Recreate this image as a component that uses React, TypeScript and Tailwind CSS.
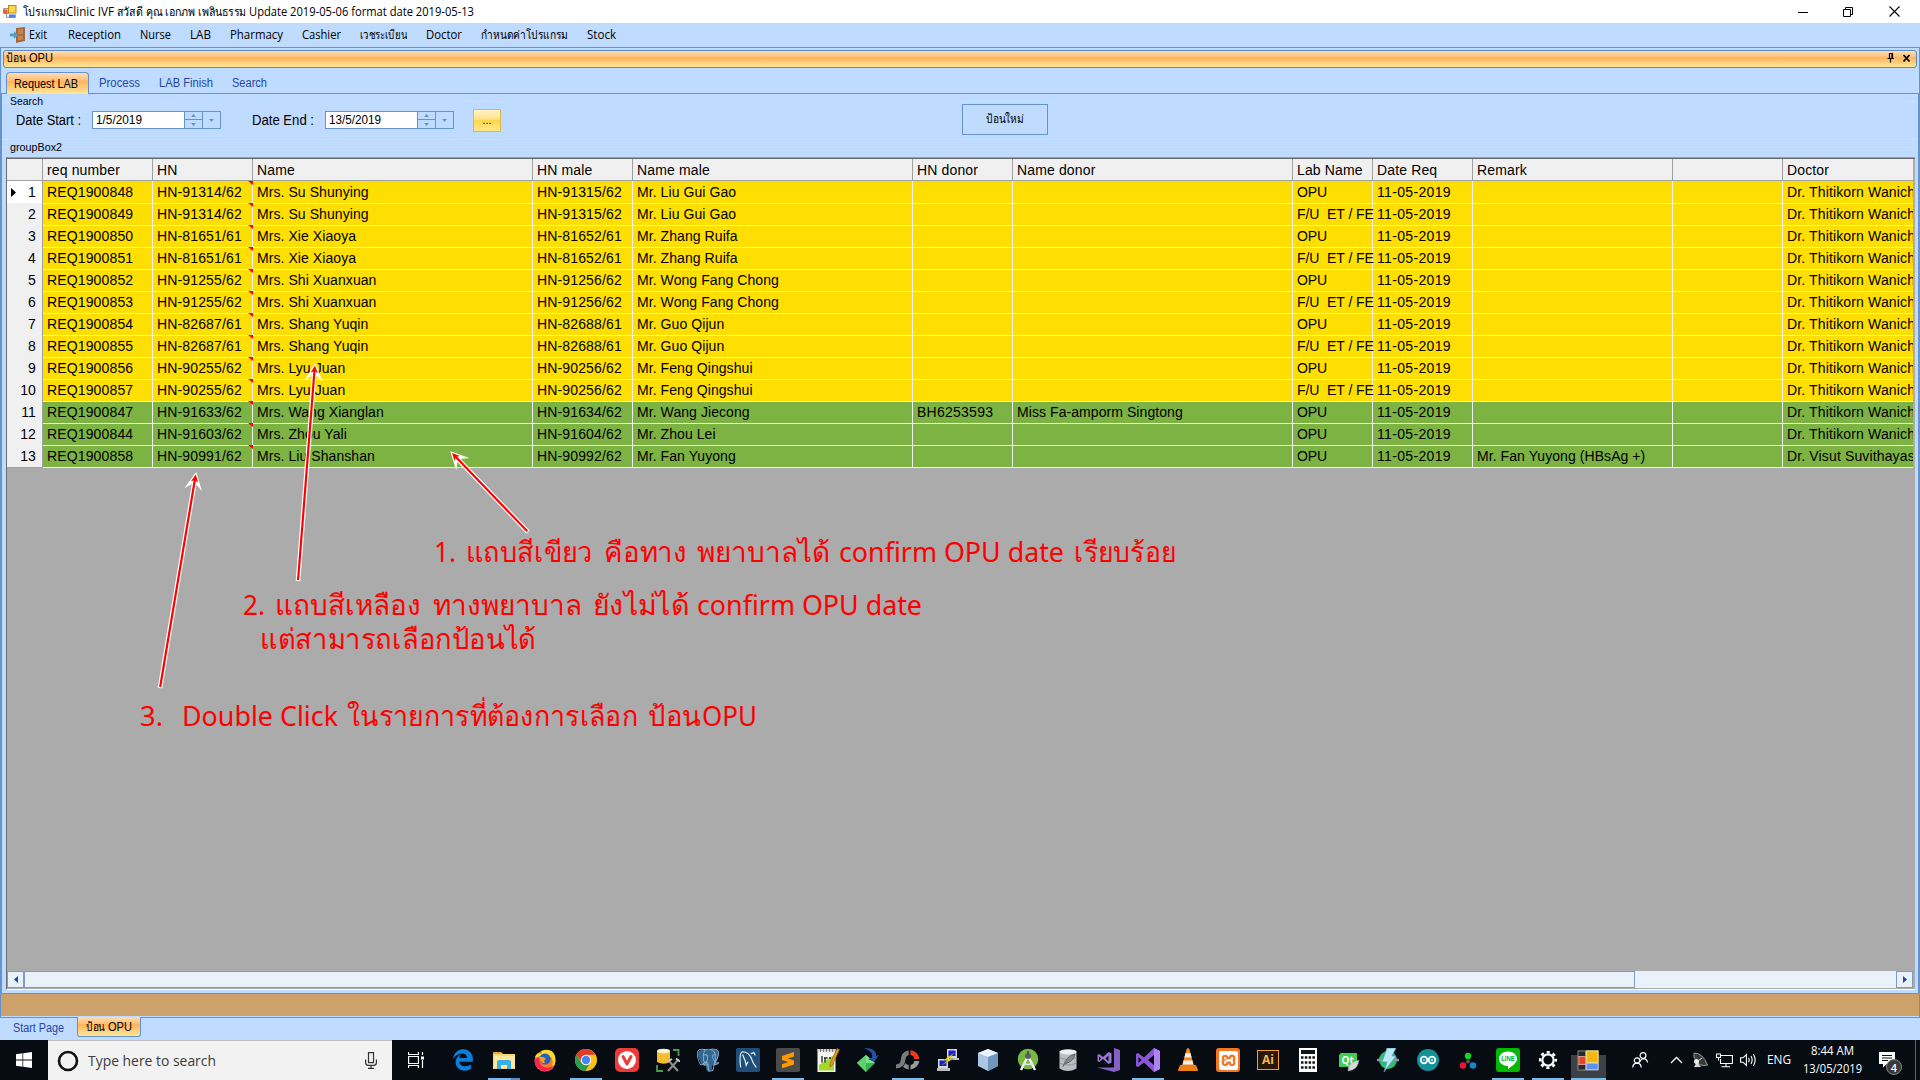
import { useLayoutEffect, useRef, useState, type ReactNode } from "react";
import { FaEdgeLegacy } from "react-icons/fa";
import { SiPostgresql, SiXampp } from "react-icons/si";

/* Text squeezed or stretched to an exact advance width. */
function Fit({ w, children, className = "" }: { w: number; children: ReactNode; className?: string }) {
  const ref = useRef<HTMLSpanElement>(null);
  const [s, setS] = useState(1);
  useLayoutEffect(() => {
    const n = ref.current;
    if (n && n.offsetWidth) setS(w / n.getBoundingClientRect().width);
  }, []);
  return (
    <span className={"inline-block whitespace-pre " + className} style={{ width: w }}>
      <span ref={ref} className="inline-block origin-left whitespace-pre" style={{ transform: `scaleX(${s})` }}>
        {children}
      </span>
    </span>
  );
}

const Svg = ({ children, s = 24, className = "" }: { children: ReactNode; s?: number; className?: string }) => (
  <svg width={s} height={s} viewBox="0 0 24 24" fill="none" className={"shrink-0 " + className}>
    {children}
  </svg>
);

const FormsIcon = ({ s }: { s: number }) => (
  <Svg s={s}>
    <rect x="1" y="2" width="21" height="20" fill="#2a2a2a" stroke="#8c8c8c" />
    <path d="M9 2v20M1 8h8M1 16h21" stroke="#a9a9a9" />
    <rect x="10" y="2" width="12" height="12" fill="#f3b713" stroke="#ffe27a" />
    <rect x="2" y="8" width="7" height="8" fill="#e0442f" stroke="#f79a8a" />
    <rect x="10" y="15" width="12" height="6.5" fill="#5b8ff0" stroke="#a9c6ff" />
  </Svg>
);

const TitleIcon = () => (
  <svg width="14" height="14" viewBox="0 0 14 14" fill="none">
    <path d="M.5 3.500h5v5h-5zM3.500 8.500v4h9v-3" fill="#eef2f8" stroke="#9a9a9a" />
    <rect x="5.500" y=".5" width="7.500" height="7.500" fill="#ffd54a" stroke="#b98a12" />
    <rect x=".5" y="4.500" width="4" height="4" fill="#e2573f" />
    <rect x="6" y="9.500" width="6" height="3" fill="#4d7fe0" />
  </svg>
);

const menu: [string, number][] = [
  ["Reception", 53], ["Nurse", 31], ["LAB", 21], ["Pharmacy", 53], ["Cashier", 39],
  ["เวชระเบียน", 47], ["Doctor", 36], ["กำหนดค่าโปรแกรม", 87], ["Stock", 29],
];

const GRID = "grid grid-cols-[36px_110px_100px_280px_100px_280px_100px_280px_80px_100px_200px_110px_130px]";
const heads = ["req number", "HN", "Name", "HN male", "Name male", "HN donor", "Name donor", "Lab Name", "Date Req", "Remark", "", "Doctor"];
const T = "Dr. Thitikorn Wanich";
const F = "F/U  ET / FE";
const rows: string[][] = [
  ["REQ1900848", "HN-91314/62", "Mrs. Su Shunying", "HN-91315/62", "Mr. Liu Gui Gao", "", "", "OPU"],
  ["REQ1900849", "HN-91314/62", "Mrs. Su Shunying", "HN-91315/62", "Mr. Liu Gui Gao", "", "", F],
  ["REQ1900850", "HN-81651/61", "Mrs. Xie Xiaoya", "HN-81652/61", "Mr. Zhang Ruifa", "", "", "OPU"],
  ["REQ1900851", "HN-81651/61", "Mrs. Xie Xiaoya", "HN-81652/61", "Mr. Zhang Ruifa", "", "", F],
  ["REQ1900852", "HN-91255/62", "Mrs. Shi Xuanxuan", "HN-91256/62", "Mr. Wong Fang Chong", "", "", "OPU"],
  ["REQ1900853", "HN-91255/62", "Mrs. Shi Xuanxuan", "HN-91256/62", "Mr. Wong Fang Chong", "", "", F],
  ["REQ1900854", "HN-82687/61", "Mrs. Shang Yuqin", "HN-82688/61", "Mr. Guo Qijun", "", "", "OPU"],
  ["REQ1900855", "HN-82687/61", "Mrs. Shang Yuqin", "HN-82688/61", "Mr. Guo Qijun", "", "", F],
  ["REQ1900856", "HN-90255/62", "Mrs. Lyu Juan", "HN-90256/62", "Mr. Feng Qingshui", "", "", "OPU"],
  ["REQ1900857", "HN-90255/62", "Mrs. Lyu Juan", "HN-90256/62", "Mr. Feng Qingshui", "", "", F],
  ["REQ1900847", "HN-91633/62", "Mrs. Wang Xianglan", "HN-91634/62", "Mr. Wang Jiecong", "BH6253593", "Miss Fa-amporm Singtong", "OPU"],
  ["REQ1900844", "HN-91603/62", "Mrs. Zhou Yali", "HN-91604/62", "Mr. Zhou Lei", "", "", "OPU"],
  ["REQ1900858", "HN-90991/62", "Mrs. Liu Shanshan", "HN-90992/62", "Mr. Fan Yuyong", "", "", "OPU"],
];

/* Names run tighter than codes; dates run wider. */
const spacing = (j: number) =>
  j === 7 ? "tracking-[-0.06px]" : j === 8 ? "tracking-[0.33px]" : j === 5 ? "tracking-[0.25px]" : j === 2 || j === 4 || j === 6 || j === 9 ? "tracking-[0.07px]" : "";

function DateBox({ value, w }: { value: string; w: number }) {
  return (
    <div className="flex h-[18px] w-[129px] border border-[#6593cf] bg-[#bfdbff]">
      <div className="flex w-[91px] items-center bg-white pl-[3px] text-[12px]"><Fit w={w}>{value}</Fit></div>
      <div className="flex w-[18px] flex-col border-l border-[#6593cf]">
        <div className="flex h-2 items-center justify-center border-b border-[#6593cf]"><svg width="5" height="3"><path d="M0 3L2.5 0L5 3z" fill="#6593cf" /></svg></div>
        <div className="flex h-2 items-center justify-center"><svg width="5" height="3"><path d="M0 0L2.5 3L5 0z" fill="#6593cf" /></svg></div>
      </div>
      <div className="flex flex-1 items-center justify-center border-l border-[#6593cf]"><svg width="5" height="3"><path d="M0 0L2.5 3L5 0z" fill="#6593cf" /></svg></div>
    </div>
  );
}

function GroupLine({ label, w }: { label: string; w: number }) {
  return (
    <div className="flex h-[14px] items-center text-[11px]">
      <div className="h-px w-[5px] bg-[#d5dfe8]" />
      <div className="px-[3px] leading-none"><Fit w={w}>{label}</Fit></div>
      <div className="h-px flex-1 bg-[#d5dfe8]" />
    </div>
  );
}

function Arrow({ x1, y1, x2, y2 }: { x1: number; y1: number; x2: number; y2: number }) {
  const a = (Math.atan2(y2 - y1, x2 - x1) * 180) / Math.PI;
  const l = Math.hypot(x2 - x1, y2 - y1);
  return (
    <g transform={`translate(${x2} ${y2}) rotate(${a})`}>
      <path d={`M${-l} 0H-3`} stroke="#fff" strokeWidth="4.6" />
      <path d="M1 0L-17 -9L-11 -1.5V1.5L-17 9Z" fill="#fff" />
      <path d={`M${-l + 1} 0H-5`} stroke="#f00" strokeWidth="2.2" />
      <path d="M-1.5 0L-9 -3.6L-7 0L-9 3.6Z" fill="#f00" />
    </g>
  );
}

const seg = (t: string, w: number, ml = 0): [string, number, number] => [t, w, ml];
const notes: { pos: string; parts: [string, number, number][] }[] = [
  { pos: "left-[434px] top-[531px]", parts: [seg("1.", 22), seg("แถบสีเขียว", 127, 10), seg("คือทาง", 83, 11), seg("พยาบาลได้", 133, 10), seg("confirm OPU date", 225, 9), seg("เรียบร้อย", 102, 10)] },
  { pos: "left-[243px] top-[584px]", parts: [seg("2.", 22), seg("แถบสีเหลือง", 146, 10), seg("ทางพยาบาล", 149, 12), seg("ยังไม่ได้", 96, 11), seg("confirm OPU date", 225, 8)] },
  { pos: "left-[260px] top-[618px]", parts: [seg("แต่สามารถเลือกป้อนได้", 276)] },
  { pos: "left-[140px] top-[695px]", parts: [seg("3.", 23), seg("Double Click", 156, 19), seg("ในรายการที่ต้องการเลือก", 291, 9), seg("ป้อน", 53, 10), seg("OPU", 55, 1)] },
];

const icons: { el: ReactNode; on?: boolean }[] = [
  { el: <FaEdgeLegacy size={22} color="#0a7fdc" /> },
  { on: true, el: <Svg><path d="M1 4h8l2 2h12v15H1z" fill="#f7d774" /><path d="M1 4h8l1 2H1z" fill="#e2a92b" /><path d="M2 8h21v12H2z" fill="#ffe79b" /><path d="M5 21v-7q0-2 2-2h10q2 0 2 2v7h-4v-4H9v4z" fill="#38b0e8" /></Svg> },
  { el: <Svg><circle cx="12" cy="13" r="10.5" fill="#ff7a1a" /><path d="M2 9C4 3 9 6 9 6L8 3Q19-1 22 8Q24 17 17 22Q22 14 18 9Z" fill="#ffd92e" /><path d="M1.5 12Q2 21 11 23.4Q18 23 21 17Q15 22 9 18Q5 14 7 8Z" fill="#f5225b" /><circle cx="12" cy="11" r="5.6" fill="#1b63c6" /><path d="M6 9Q11 8 13 11Q10 12 12 15Q7 16 6 9z" fill="#ff9c21" /></Svg> },
  { on: true, el: <Svg><circle cx="12" cy="12" r="11" fill="#fbc116" /><path d="M2.4 6.6A11 11 0 0 0 11.5 23L16 15L7 14.5Z" fill="#2a9c4a" /><path d="M2.4 6.6L8 15L12 7L21.6 6.6Q17 1 12 1Q6 1 2.4 6.6z" fill="#e23b2e" /><circle cx="12" cy="12" r="5.2" fill="#fff" /><circle cx="12" cy="12" r="4.2" fill="#4285f4" /></Svg> },
  { el: <Svg><rect width="24" height="24" rx="5" fill="#ef3939" /><circle cx="12" cy="12" r="9" fill="#fff" /><path d="M8 8.5L12 16L16 8.5" stroke="#ef3939" strokeWidth="3" strokeLinecap="round" strokeLinejoin="round" /></Svg> },
  { el: <Svg><path d="M1 3v11q6.500 3.500 13 0V3z" fill="#f4bc2e" /><ellipse cx="7.500" cy="3" rx="6.500" ry="2.300" fill="#fff3cf" /><path d="M17 2h5.500v6M1 17v6h6" stroke="#4d9a4d" strokeWidth="1.800" /><path d="M12 12l10 11M22 12L12 23" stroke="#8f8f8f" strokeWidth="2" /><path d="M11 14l5-3M20 10.500l4 3" stroke="#ccc" strokeWidth="2" /></Svg> },
  { el: <Svg><path d="M3 3Q7 0 12 2Q18-1 22 3Q24 9 19.500 15L22 16Q19 18.500 16 17.500Q16.500 24 13 24Q9.500 23 10 17Q6 19 4 13Q0 5 3 3z" fill="#336791" /><g transform="translate(.5 .5) scale(.96)"><SiPostgresql size={24} color="#9fc0dc" /></g></Svg> },
  { el: <div className="flex size-6 items-center justify-center rounded-[2px] bg-[#1f4f79]"><Svg s={22}><path d="M4 20Q2 4 6 3Q13 3 16 11Q17 15 21 20M6 6l3 7 1 5 2-4M15 5l4-1M18 3l2 4" stroke="#e7f1f9" strokeWidth="1.3" /></Svg></div> },
  { on: true, el: <Svg><rect width="24" height="24" rx="2" fill="#4b4b4b" /><path d="M6 8L18 4v4.5L12 10.6L18 12.5v4L6 20.3v-4L12.3 14L6 12z" fill="#ff9800" /></Svg> },
  { el: <Svg><path d="M1.500 1h18v23h-18z" fill="#f4f4ee" /><path d="M3 17L18 7v15.500H3z" fill="#a6d82b" /><path d="M1.500 1h18v2.500h-18z" fill="#cfcfcf" /><path d="M4.500 1v3M7.500 1v3M10.500 1v3M13.500 1v3M16.500 1v3" stroke="#666" strokeWidth=".8" /><path d="M6 8v6.500M9 10v4.500M8 10h3.500M13 10h2" stroke="#222" strokeWidth="1.300" /><path d="M14 16L21 .5l2.500 1L16.500 17 14 19z" fill="#e79a2a" stroke="#8a4b12" strokeWidth=".6" /></Svg> },
  { el: <Svg><path d="M10 7l9 8-9 9-9-9z" fill="#35b44a" /><path d="M10 7l9 8H1z" fill="#7fe08a" /><path d="M10 7v17L1 15z" fill="#5fd070" /><path d="M8 0Q21 0 20 8l3-1-5 7-6-3 4-1Q18 4 8 0z" fill="#2450a5" /></Svg> },
  { on: true, el: <Svg><path d="M14.5 2.2A9.5 9.5 0 0 1 23.3 11H18.2A4.5 4.5 0 0 0 14.5 7z" fill="#f03a1c" /><path d="M23.3 13A9.5 9.5 0 0 1 14.5 21.4V17A4.5 4.5 0 0 0 18.2 13z" fill="#9a9a9a" /><path d="M12.7 2.2V7Q9.600 8 9.300 12Q8.500 20 0 20.500V16.500Q4.700 16 4.700 12Q5 4 12.700 2.200z" fill="#7b7b7b" /><path d="M9.5 15Q10.5 17 12.700 17V21.400Q9 21 7 19z" fill="#8b8b8b" /></Svg> },
  { el: <Svg><rect x="11" y="1" width="10" height="9" fill="#d8d8d8" /><rect x="12.5" y="2.5" width="7" height="5.5" fill="#1320d8" /><path d="M10 10h13v2H10z" fill="#bcbcbc" /><rect x="2" y="11" width="10" height="9" fill="#d8d8d8" /><rect x="3.5" y="12.5" width="7" height="5.5" fill="#1320d8" /><path d="M1 20h13v3H1z" fill="#bcbcbc" /><path d="M18 5L8 12h4l-6 5 11-6h-4z" fill="#ffe81a" stroke="#7a6a00" strokeWidth=".5" /></Svg> },
  { el: <Svg><path d="M12 1l10 4v13l-10 5-10-5V5z" fill="#a9c6e3" /><path d="M12 1l10 4-10 4L2 5z" fill="#e8f3fc" /><path d="M12 9l10-4v13l-10 5z" fill="#6f97bd" /></Svg> },
  { el: <Svg><circle cx="12" cy="11" r="10.3" fill="#78b843" /><path d="M12 8L5 22M12 8l7 14" stroke="#f2f2f2" strokeWidth="2.4" /><circle cx="12" cy="8" r="3" fill="#5f5f5f" /><path d="M7 15q5 3 10 0" stroke="#e5e5e5" strokeWidth="1.6" /><path d="M12 3v4" stroke="#555" strokeWidth="2" /></Svg> },
  { el: <Svg><path d="M3.5 3.5v17q8.500 5 17 0v-17z" fill="#b9bec4" /><ellipse cx="12" cy="3.800" rx="8.500" ry="2.600" fill="#eceff2" /><path d="M3.500 9.500q8.500 4 17 0M3.500 15q8.500 4 17 0" stroke="#8d9399" /><path d="M7 19Q10 8 19 6Q18 13 9 16" fill="#858b91" stroke="#4d5257" strokeWidth=".8" /></Svg> },
  { el: <Svg><path d="M18 0l6 2v20l-6 2-17-4.500 17 0z" fill="#8661c5" /><path d="M1.500 7l1.500-1 4 3 5.500-5 3 1.200v9.600l-3 1.200-5.500-5-4 3-1.500-1zM12.500 7.500L9.500 10.500l3 3zM3 8.500v4l2-2z" fill="#9a77d3" fillRule="evenodd" /></Svg> },
  { on: true, el: <Svg><path d="M18 0l6 3v18l-6 3L8 14.500 2 19l-2-1V6l2-1 6 4.500zM18 7l-6 5 6 5zM2.500 9v6l3-3z" fill="#8a56d6" fillRule="evenodd" /><path d="M18 0l6 3v18l-6 3z" fill="#b083f0" /></Svg> },
  { el: <Svg><path d="M12 0q1 0 1.500 1.500L18 18H6L10.500 1.500Q11 0 12 0z" fill="#f28c1b" /><path d="M9.600 5h4.800l1.200 4.500H8.400zM7.600 12.500h8.800l1 4H6.600z" fill="#eee" /><path d="M4 17h16l2 5q0 1-1 1H3q-1 0-1-1z" fill="#ef7f12" /></Svg> },
  { el: <div className="flex size-6 items-center justify-center rounded-[3px] bg-[#f37623]"><SiXampp size={19} color="#fff" /></div> },
  { el: <div className="flex h-[20px] w-[22px] items-center justify-center border border-[#f0a02a] bg-[#2a1705] font-['Open_Sans'] text-[12px] leading-none font-bold text-[#f4b45a]">Ai</div> },
  { el: <Svg><rect x="3" width="18" height="24" fill="#fff" /><rect x="5" y="2" width="14" height="4" fill="#10141b" /><path d="M5 9.500h14M5 14.500h14M5 19.500h14" stroke="#10141b" strokeWidth="2.600" strokeDasharray="2.500 1.300" /></Svg> },
  { el: <Svg><path d="M5 5h16v14H3V7z" fill="#41cd52" /><text x="5.500" y="15.500" fontSize="10" fontWeight="700" fill="#fff" fontFamily="Open Sans">Qt</text><path d="M12 23Q11 15 23 12Q22 22 12 23z" fill="#d7d7d7" stroke="#999" strokeWidth=".5" /></Svg> },
  { el: <Svg><circle cx="12" cy="12" r="9" fill="#2dbf6b" /><path d="M1 12h22" stroke="#8b9aa0" strokeWidth="2.500" /><path d="M11 0h9l-4 8h4L8 24l3-10H6z" fill="#b9e8f5" stroke="#4b9fc0" strokeWidth=".7" /></Svg> },
  { el: <Svg><circle cx="12" cy="12" r="11" fill="#14929a" /><circle cx="8" cy="12" r="3.300" stroke="#fff" strokeWidth="1.700" /><circle cx="16" cy="12" r="3.300" stroke="#fff" strokeWidth="1.700" /><path d="M6.800 12h2.400M14.800 12h2.400M16 10.800v2.400" stroke="#fff" strokeWidth=".8" /></Svg> },
  { el: <Svg><path d="M12 8v5l-5 4M12 13l5 4" stroke="#3b3b3b" /><circle cx="12" cy="8" r="3.200" fill="#12d61f" /><circle cx="7" cy="17.500" r="3.200" fill="#f0123c" /><circle cx="17" cy="17.500" r="3.200" fill="#1288c4" /><circle cx="12" cy="13.500" r="2" fill="#555" /></Svg> },
  { on: true, el: <Svg><rect width="24" height="24" rx="3" fill="#00b900" /><path d="M12 3.500c5 0 9 3.200 9 7.300 0 4-5 7.600-9 10.200v-3c-5 0-9-3-9-7.200s4-7.300 9-7.300z" fill="#fff" /><text x="5.200" y="13.300" fontSize="6.600" fontWeight="700" fill="#00b900" textLength="13.600" lengthAdjust="spacingAndGlyphs" fontFamily="Liberation Sans">LINE</text></Svg> },
  { on: true, el: <Svg><circle cx="12" cy="12" r="5.700" stroke="#fff" strokeWidth="2.200" /><circle cx="12" cy="12" r="7.900" stroke="#fff" strokeWidth="2.400" strokeDasharray="3.100 3.105" strokeDashoffset="1.550" /></Svg> },
];

function Taskbar() {
  return (
    <div className="flex h-10 w-full bg-[#070c13] font-['Open_Sans','Noto_Sans',sans-serif] text-white">
      <div className="flex w-12 items-center justify-center">
        <svg width="16" height="16" viewBox="0 0 16 16" fill="#fff"><path d="M0 2.200L6.500 1.300V7.600H0zM7.200 1.200L16 0V7.600H7.200zM0 8.400H6.500V14.700L0 13.800zM7.200 8.400H16V16L7.200 14.800z" /></svg>
      </div>
      <div className="flex w-[344px] items-center border-t border-[#bdbdbd] bg-[#f2f2f2] pr-[15px] pl-[9px]">
        <svg width="22" height="22"><circle cx="11" cy="11" r="9" fill="none" stroke="#111" strokeWidth="2.600" /></svg>
        <div className="ml-[9px] flex-1 text-[15px] text-[#3c3c3c]"><Fit w={128}>Type here to search</Fit></div>
        <svg width="12" height="17" viewBox="0 0 12 17" fill="none" stroke="#333" strokeWidth="1.200"><rect x="3.500" y=".6" width="5" height="10" /><path d="M.6 7.500V10.500Q.6 13.400 3.500 13.400H8.500Q11.400 13.400 11.400 10.500V7.500M6 13.500V16.400M3 16.400H9" /></svg>
      </div>
      <div className="flex w-[51px] items-center pl-4">
        <svg width="17" height="16" fill="none" stroke="#fff" strokeWidth="1.200"><path d="M.6 0V2.500H10.400V0M.6 16V13.500H10.400V16M.6 4.500H10.400V11.500H.6zM14.500 0V3M14.500 8V16" /><path d="M13 4.500h3v3h-3z" fill="#fff" stroke="none" /></svg>
      </div>
      {icons.map((ic, i) => (
        <div key={i} className={(i < 5 ? "w-[41px] pr-px" : "w-10") + " relative flex h-10 shrink-0 items-center justify-center"}>
          {ic.el}
          {ic.on && <div className="absolute bottom-0 left-1 flex h-[2px] w-8 bg-[#76b9ed]">{i === 1 && <div className="ml-auto w-[9px] bg-[#5a8db8]" />}</div>}
        </div>
      ))}
      <div className="relative ml-[3px] flex w-[35px] items-center justify-center">
        <div className="absolute inset-x-0 top-[15px] bottom-0 border-b-2 border-[#76b9ed] bg-[#3d4146]" />
        <div className="relative"><FormsIcon s={23} /></div>
      </div>
      <div className="ml-auto flex items-center">
        <svg width="17" height="16" viewBox="0 0 17 16" fill="none" stroke="#fff" strokeWidth="1.200" className="mr-[21px]"><circle cx="11" cy="3.500" r="2.900" /><path d="M8 9.500Q9 6.800 11 6.600Q15 6.800 15.600 10.500" /><circle cx="5" cy="8.500" r="2.700" /><path d="M.7 15.500Q1 11.400 5 11.200Q9 11.400 9.200 15.500" /></svg>
        <svg width="13" height="8" fill="none" stroke="#fff" strokeWidth="1.300" className="mr-[9px]"><path d="M1 7L6.500 1.500L12 7" /></svg>
        <svg width="17" height="16" viewBox="0 0 17 16" className="mr-[7px]"><path d="M2 1Q11 1 15.500 13Q8 15 4 9Q1 5 2 1z" fill="#3a3a38" stroke="#b5b5b2" strokeWidth=".8" /><path d="M2 15l3-5 4 5z" fill="#d9d9d9" /><circle cx="4.500" cy="9.500" r="2.500" fill="#eee" /><path d="M6 9l4-3" stroke="#ddd" /></svg>
        <svg width="17" height="15" viewBox="0 0 17 15" fill="none" stroke="#fff" strokeWidth="1.100" className="mr-[7px]"><path d="M5 2.500H16.400V10.500H4.500V6M10 10.500V13.800M5.500 13.800H14M.6 1H4.500V4.500H.6zM2.500 4.500V7.500" /></svg>
        <svg width="17" height="14" viewBox="0 0 17 14" fill="none" stroke="#fff" strokeWidth="1.100" className="mr-[10px]"><path d="M.6 4.800H3L6.400 1.500V12.500L3 9.200H.6zM8.500 4.800Q9.800 7 8.500 9.200M11 3Q13.300 7 11 11M13.300 1Q17 7 13.300 13" /></svg>
        <div className="mr-3 text-[12px]"><Fit w={24}>ENG</Fit></div>
        <div className="mr-[17px] flex w-[59px] flex-col items-center text-[12px] leading-[18px]"><Fit w={43}>8:44 AM</Fit><Fit w={59}>13/05/2019</Fit></div>
        <div className="relative mr-[20px] h-4 w-4">
          <svg width="17" height="16"><path d="M0 0H16V12H8L4 15.500V12H0z" fill="#fff" /><path d="M3 3.500H13M3 6H13M3 8.500H9" stroke="#070c13" /></svg>
          <div className="absolute top-[7px] left-[7px] flex size-4 items-center justify-center rounded-full border border-[#858585] bg-[#3a3a3a] text-[11px] leading-none font-semibold">4</div>
        </div>
        <div className="mr-1 h-10 w-px bg-[#5d6268]" />
      </div>
    </div>
  );
}

export default function App() {
  return (
    <div className="relative flex h-[1080px] w-[1920px] flex-col overflow-hidden bg-[#bfdbff] font-['Liberation_Sans','Noto_Sans',sans-serif] text-black">
      <div className="flex h-[23px] shrink-0 items-center bg-white pl-[3px] font-['Open_Sans','Noto_Sans',sans-serif] text-[12px]">
        <div className="mr-[6px]"><TitleIcon /></div>
        <Fit w={43}>โปรแกรม</Fit>
        <Fit w={48}>Clinic IVF</Fit>
        <Fit w={129} className="ml-[3px]">สวัสดี คุณ เอกภพ เพลินธรรม</Fit>
        <Fit w={225} className="ml-[3px]">Update 2019-05-06 format date 2019-05-13</Fit>
        <div className="ml-auto flex items-center pr-[20px]">
          <svg width="10" height="10" className="mr-[35px]"><path d="M0 5.500H10" stroke="#000" /></svg>
          <svg width="10" height="10" className="mr-[36px]" fill="none" stroke="#000"><path d="M.5 2.500h7v7h-7zM2.500 2.500v-2h7v7h-2" /></svg>
          <svg width="11" height="11" stroke="#000" strokeWidth="1.100"><path d="M.5 .5l10 10M10.500 .5l-10 10" /></svg>
        </div>
      </div>

      <div className="flex h-6 shrink-0 items-center gap-[19px] pl-[10px] font-['Open_Sans','Noto_Sans',sans-serif] text-[12px]">
        <div className="mr-[2px] flex items-center gap-[3px]">
          <svg width="16" height="16" viewBox="0 0 16 16"><path d="M6 1l9-1v14l-9 2z" fill="#a4683a" /><path d="M8 2.500l5-.5v5l-5 .5zM8 9l5-.5v4L8 13.500z" fill="#c08552" /><path d="M0 6.500h4V4l4 4-4 4V9.500H0z" fill="#4f9fc4" /></svg>
          <Fit w={18}>Exit</Fit>
        </div>
        {menu.map(([t, w]) => <Fit key={t} w={w}>{t}</Fit>)}
      </div>

      <div className="flex h-[971px] shrink-0 flex-col border border-[#6593cf]">
        <div className="mx-[2px] mt-[2px] flex h-[18px] shrink-0 items-center rounded-[3px] border border-[#5a8ac8] bg-[linear-gradient(#ffdcae,#ffc078_38%,#ffb35c_42%,#fee79a)] pb-[2px] pl-[2px] text-[12px]">
          <Fit w={20}>ป้อน</Fit><Fit w={24} className="ml-[3px]">OPU</Fit>
          <svg width="24" height="12" className="mr-[5px] ml-auto" fill="none" stroke="#000"><path d="M2.500 6V1.500H5.500V6M5 1V6M.5 6.500H7M3.500 7V10.500" strokeWidth="1.200" /><path d="M16.500 3l6 6.500M22.500 3l-6 6.500" strokeWidth="1.800" /></svg>
        </div>
        <div className="flex h-[26px] shrink-0 items-end border-b border-[#6593cf] pl-[5px] text-[12px] text-[#1f48a4]">
          <div className="-mb-px flex h-[22px] w-[83px] items-center rounded-t-[4px] border border-b-0 border-[#6593cf] bg-[linear-gradient(#ffdcae,#ffc078_35%,#ffb35c_40%,#fee79a)] pl-[7px] text-black"><Fit w={64}>Request LAB</Fit></div>
          <div className="flex h-[20px] items-center gap-[19px] pl-[10px]"><Fit w={41}>Process</Fit><Fit w={54}>LAB Finish</Fit><Fit w={35}>Search</Fit></div>
        </div>

        <div className="flex h-[900px] shrink-0 flex-col border-x border-b border-[#6593cf] pr-[1px]">
          <GroupLine label="Search" w={33} />
          <div className="mb-[7px] flex h-[24px] items-center pl-[14px] text-[14px]">
            <Fit w={65}>Date Start :</Fit><div className="ml-[11px] flex"><DateBox value="1/5/2019" w={46} /></div>
            <Fit w={62} className="ml-[31px]">Date End :</Fit><div className="ml-[11px] flex"><DateBox value="13/5/2019" w={52} /></div>
            <div className="ml-[19px] flex h-[23px] w-[28px] items-center justify-center border border-[#e0b64e] bg-[linear-gradient(#fff3c4,#ffe58f_40%,#ffd64a_50%,#ffe88c)] text-[11px]">...</div>
            <div className="-mt-[2px] ml-[461px] flex h-[31px] w-[86px] items-center justify-center border border-[#6593cf] text-[12px]"><Fit w={38}>ป้อนใหม่</Fit></div>
          </div>
          <div className="h-px w-full shrink-0 bg-[#d5dfe8]" />
          <GroupLine label="groupBox2" w={52} />
          <div className="mt-[3px] ml-[4px] flex h-[833px] w-[1909px] shrink-0 flex-col border-b border-l border-white border-l-[#6d6d6d] bg-[#ababab]">
            <div className="h-[2px] w-full shrink-0 border-t border-[#a0a0a0] bg-[#696969]" />
            <div className="w-[1906px] overflow-hidden text-[14px] tracking-[0.14px]">
              <div className={GRID + " h-[22px] bg-[#f0f0f0]"}>
                {["", ...heads].map((h, i) => (
                  <div key={i} className="flex items-center overflow-hidden border-r border-b border-[#a0a0a0] pt-px pl-1 whitespace-pre last:border-r-0">{h}</div>
                ))}
              </div>
              {rows.map((r, i) => (
                <div key={i} className={GRID + " h-[22px] " + (i < 10 ? "bg-[#ffde02]" : "bg-[#7cb342]")}>
                  <div className={"flex items-center justify-end border-r border-b border-[#a0a0a0] pt-px pr-[6px] " + (i ? "bg-[#f0f0f0]" : "bg-white")}>
                    {i === 0 && <svg width="5" height="9" className="mr-auto ml-1"><path d="M0 0L5 4.500L0 9z" /></svg>}
                    {i + 1}
                  </div>
                  {[...r, "11-05-2019", i === 12 ? "Mr. Fan Yuyong (HBsAg +)" : "", "", i === 12 ? "Dr. Visut Suvithayas" : T].map((c, j) => (
                    <div key={j} className={"relative flex items-center border-r border-b border-[#f0f0f0] pt-px pl-1 whitespace-pre last:border-r-0 " + spacing(j)}>
                      {c}
                      {j === 1 && <svg width="5" height="4" className="absolute top-0 -right-px"><path d="M0 0H5V4z" fill="#f00" /></svg>}
                    </div>
                  ))}
                </div>
              ))}
              <div className="h-px bg-[#696969]" />
            </div>
            <div className="mt-auto mb-px flex h-[17px] w-[1906px] shrink-0 bg-[#e9f1fb]">
              <div className="flex w-[17px] items-center justify-center border border-[#7c9cc6]"><svg width="4" height="7"><path d="M4 0L0 3.500L4 7z" fill="#1f48a4" /></svg></div>
              <div className="w-[1611px] border border-[#7c9cc6]" />
              <div className="ml-auto flex w-[17px] items-center justify-center border border-[#7c9cc6]"><svg width="4" height="7"><path d="M0 0L4 3.500L0 7z" fill="#1f48a4" /></svg></div>
            </div>
          </div>
        </div>
        <div className="h-[22px] shrink-0 bg-[#cca26a]" />
      </div>

      <div className="flex h-[22px] shrink-0 items-start pl-[13px] text-[12px]">
        <div className="mt-px w-[64px] text-[#1f48a4]"><Fit w={51}>Start Page</Fit></div>
        <div className="-mt-px flex h-[20px] w-[64px] items-center justify-center rounded-b-[3px] border border-t-0 border-[#6593cf] bg-[linear-gradient(#ffdcae,#ffc078_35%,#ffb35c_40%,#fee79a)]"><Fit w={19}>ป้อน</Fit><Fit w={24} className="ml-[3px]">OPU</Fit></div>
      </div>

      <Taskbar />

      <svg width="700" height="800" className="absolute top-0 left-0">
        <Arrow x1={528} y1={532} x2={451} y2={452} />
        <Arrow x1={298} y1={581} x2={315} y2={364} />
        <Arrow x1={160} y1={688} x2={196} y2={473} />
      </svg>
      {notes.map((n, i) => (
        <div key={i} className={"absolute flex font-['Noto_Sans','DejaVu_Sans',sans-serif] text-[28px] leading-[40px] text-[#f00] " + n.pos}>
          {n.parts.map(([t, w, ml], j) => (
            <div key={j} style={{ marginLeft: ml }}><Fit w={w}>{t}</Fit></div>
          ))}
        </div>
      ))}
    </div>
  );
}
